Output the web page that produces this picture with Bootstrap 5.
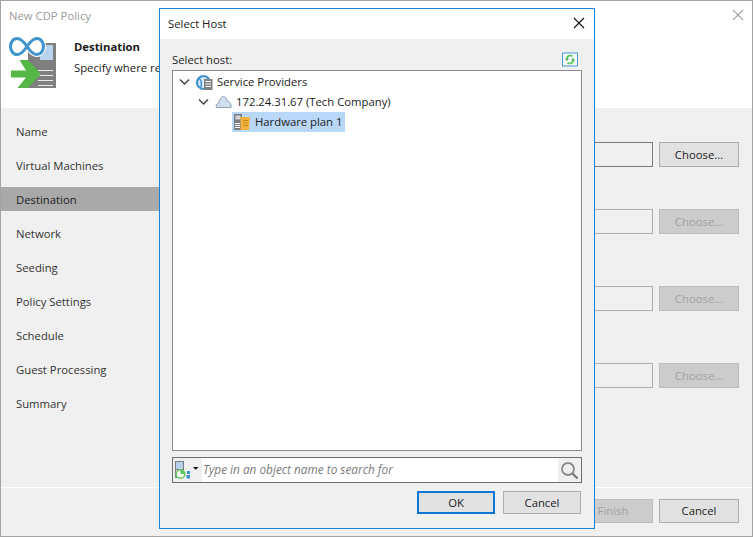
<!DOCTYPE html>
<html lang="en"><head><meta charset="utf-8"><title>Select Host</title>
<link rel="stylesheet" href="https://cdn.jsdelivr.net/npm/bootstrap@5.3.0/dist/css/bootstrap.min.css">
<style>
html,body{margin:0;height:537px;overflow:hidden;background:#fff}
body{font-family:"Open Sans","Noto Sans","Liberation Sans",sans-serif;font-size:11.3px;line-height:16px;color:#222}
.wiz{width:753px;height:537px;border:1px solid #a3a3a3;display:flex;flex-direction:column;position:relative;background:#f0f0f0}
.wiz-head{height:107px;background:#fff;flex:none;padding:7px 8px 0;position:relative}
.wiz-title{color:#9a9a9a;height:16px}
.wiz-x{position:absolute;right:8px;top:8px}
.wiz-id{margin-top:11px;gap:16px}
.wiz-id svg{flex:none;margin-left:-1px}
.wiz-id b{font-weight:700;color:#1a1a1a}
.wiz-id .lines{padding-top:4px}
.wiz-id .lines div:last-child{margin-top:5px;white-space:nowrap}
.wiz-main{flex:1;min-height:0}
.side{width:158px;flex:none;padding-top:11px}
.side div{height:24px;line-height:26px;padding-left:15px;margin-bottom:10px;color:#333}
.side .on{background:#a9a9a9;color:#1d1d1d}
.pane{flex:1;padding:34px 13px 0 0}
.frow{gap:6px;height:25px}
.frow.r2{margin-top:42px}
.frow.r3{margin-top:52px}
.fld{flex:1;background:#f0f0f0;border:1px solid #7a7a7a}
.frow.off .fld{border-color:#adadb5}
.vbtn{width:80px;height:25px;padding:0;border:1px solid #adadad;border-radius:0;background:#e1e1e1;font-size:11.3px;line-height:20px;color:#222;flex:none}
.vbtn:disabled{background:#ccc;border-color:#bcbcbc;color:#a0a0a0;opacity:1}
.wiz-foot{height:49px;flex:none;border-top:1px solid #fff;padding-top:11px;padding-right:13px;gap:6px}
.wiz-foot .vbtn{height:24px}
.dlg{position:absolute;left:158px;top:7px;width:436px;height:521px;border:1px solid #1883d7;background:#f0f0f0;display:flex;flex-direction:column}
.dlg-head{height:30px;background:#fff;padding:7px 8px 0;flex:none;position:relative;color:#222}
.dlg-x{position:absolute;right:9px;top:8px}
.dlg-body{flex:1;padding:13px 12px 0;min-height:0}
.lblrow{height:18px;position:relative}
.lblrow svg{position:absolute;right:4px;top:0}
.tree{height:381px;background:#fff;border:1px solid #8a8a94;padding:1px 0 0 3px}
.tn{height:20px;gap:0}
.tn.l2{padding-left:19px}
.tn.l3{padding-left:56px}
.tn .chev{width:16px;flex:none;margin-right:4px}
.tn .ic{margin-right:4px;flex:none}
.tn .txt{color:#1c1c1c;white-space:nowrap}
.sel{background:#b9d7f7;height:20px;padding-right:3px}
.srch{height:26px;margin-top:6px;border:1px solid #6f6f6f;background:#fff}
.srch .l{width:29px;height:24px;background:#f0f0f0;flex:none}
.srch em{flex:1;color:#7b7b7b;padding:0 0 2px 1px;font-style:italic;font-size:11.8px}
.srch .r{width:23px;height:24px;background:#f0f0f0;flex:none}
.dlg-foot{gap:8px;margin-top:8px;padding-right:1px}
.dlg-foot .vbtn{width:78px;height:23px}
.dlg-foot .okb{border:2px solid #0a78d4;line-height:19px}
</style></head><body>
<div class="wiz">
  <div class="wiz-head">
    <div class="wiz-title">New CDP Policy</div>
    <svg class="wiz-x" width="12" height="12" viewBox="0 0 12 12"><path d="M1 1l10 10M11 1L1 11" stroke="#a5a5a5" stroke-width="1.1" fill="none"/></svg>
    <div class="d-flex wiz-id">
      <svg width="50" height="54" viewBox="8 35 50 54">
        <rect x="28" y="43" width="28" height="45" fill="#7f7f7f"/>
        <rect x="40" y="45" width="13" height="15" fill="#b9d2ee"/>
        <path d="M38 70.500h15M38 75.500h15M38 80.500h15M38 85.500h15" stroke="#ececec" stroke-width="1.100"/>
        <path d="M27 46.500C24 42 21 38.500 17 38.500 13 38.500 10.500 42.500 10.500 46.500 10.500 50.500 13 54.500 17 54.500 21 54.500 24 51 27 46.500 30 42 33 38.500 37 38.500 41 38.500 43.500 42.500 43.500 46.500 43.500 50.500 41 54.500 37 54.500 33 54.500 30 51 27 46.500Z" fill="#fff" stroke="#fff" stroke-width="5"/>
        <path d="M27 46.500C24 42 21 38.500 17 38.500 13 38.500 10.500 42.500 10.500 46.500 10.500 50.500 13 54.500 17 54.500 21 54.500 24 51 27 46.500 30 42 33 38.500 37 38.500 41 38.500 43.500 42.500 43.500 46.500 43.500 50.500 41 54.500 37 54.500 33 54.500 30 51 27 46.500Z" fill="none" stroke="#3f95cb" stroke-width="3"/>
        <path d="M19.500 60H28L41 74 28 88H17.500L26 77.500H11V70.500H26Z" fill="#55b745"/>
      </svg>
      <div class="lines"><div><b>Destination</b></div><div>Specify where re</div></div>
    </div>
  </div>
  <div class="wiz-main d-flex">
    <div class="side">
      <div>Name</div><div>Virtual Machines</div><div class="on">Destination</div><div>Network</div><div>Seeding</div><div>Policy Settings</div><div>Schedule</div><div>Guest Processing</div><div>Summary</div>
    </div>
    <div class="pane">
      <div class="d-flex frow"><div class="fld"></div><button class="btn vbtn">Choose...</button></div>
      <div class="d-flex frow off r2"><div class="fld"></div><button class="btn vbtn" disabled>Choose...</button></div>
      <div class="d-flex frow off r3"><div class="fld"></div><button class="btn vbtn" disabled>Choose...</button></div>
      <div class="d-flex frow off r3"><div class="fld"></div><button class="btn vbtn" disabled>Choose...</button></div>
    </div>
  </div>
  <div class="wiz-foot d-flex justify-content-end">
    <button class="btn vbtn" disabled>Finish</button><button class="btn vbtn">Cancel</button>
  </div>

  <div class="dlg">
    <div class="dlg-head">Select Host
      <svg class="dlg-x" width="12" height="12" viewBox="0 0 12 12"><path d="M1 1l10 10M11 1L1 11" stroke="#111" stroke-width="1.1" fill="none"/></svg>
    </div>
    <div class="dlg-body d-flex flex-column">
      <div class="lblrow">Select host:
        <svg width="16" height="15" viewBox="0 0 16 15"><rect x=".5" y="1" width="15" height="13" fill="#f4f8fc" stroke="#4a9ad0"/><path d="M10.500 4.200A3.800 3.800 0 0 0 5 5.500V7M5.500 10.800A3.800 3.800 0 0 0 11 9.500V8" stroke="#5cc75a" stroke-width="1.700" fill="none"/><path d="M3 6.500h4L5 9zM9 8.500h4L11 6z" fill="#46b348"/></svg>
      </div>
      <div class="tree">
        <div class="tn d-flex align-items-center"><svg class="chev" width="16" height="10" viewBox="0 0 16 10"><path d="M4 2.500l4.500 4.500 4.500-4.500" stroke="#444" stroke-width="1.500" fill="none"/></svg>
          <svg class="ic" width="17" height="17" viewBox="0 0 17 17"><circle cx="7.500" cy="8.500" r="6.500" fill="#dcebf6" stroke="#3d95cf" stroke-width="2.200"/><path d="M3 4c2 2 3 5 2 9" stroke="#3d95cf" stroke-width="1.500" fill="none"/><rect x="8" y="5" width="8.500" height="11" fill="#808080"/><path d="M9.500 7.500h5.500M9.500 10h5.500M9.500 12.500h5.500" stroke="#fff"/></svg>
          <span class="txt">Service Providers</span></div>
        <div class="tn l2 d-flex align-items-center"><svg class="chev" width="16" height="10" viewBox="0 0 16 10"><path d="M4 2.500l4.500 4.500 4.500-4.500" stroke="#444" stroke-width="1.500" fill="none"/></svg>
          <svg class="ic" width="17" height="14" viewBox="0 0 17 14"><path d="M1.500 12.500C.5 10.500 1.500 8.500 3.500 8.500 4.500 4.500 6.500 1.500 8.500 1.500 10.500 1.500 11.500 3.500 12 6 14.500 6 16.500 9 16 12.500Z" fill="#cfe0f2" stroke="#949ea9"/></svg>
          <span class="txt">172.24.31.67 (Tech Company)</span></div>
        <div class="tn l3 d-flex align-items-center"><div class="sel d-flex align-items-center"><svg class="ic" width="19" height="18" viewBox="0 0 19 18"><rect x="2" y="1" width="8" height="16" fill="#7d7d7d"/><rect x="3.500" y="2.500" width="5" height="4" fill="#d5d5d5"/><path d="M3 10.500h5M3 12.500h5M3 14.500h5" stroke="#fff"/><path d="M8.500 4H18L17 17H8.500z" fill="#f1b13c"/><path d="M11 7.500h5M11 10h5M11 12.500h5" stroke="#c98a1c"/></svg><span class="txt">Hardware plan 1</span></div></div>
      </div>
      <div class="srch d-flex align-items-center">
        <div class="l d-flex align-items-center"><svg width="29" height="22" viewBox="0 0 29 22"><rect x="2.500" y="2.500" width="8" height="8" fill="#b9d0ec" stroke="#7c7c7c"/><path d="M2.500 10.500v8h4" fill="none" stroke="#7c7c7c"/><circle cx="7.500" cy="15" r="4.300" fill="#fff" stroke="#5cc75a" stroke-width="1.500"/><path d="M7.500 15v-4.300A4.300 4.300 0 0 1 11.800 15z" fill="#5cc75a"/><rect x="14" y="12" width="3" height="3" fill="#3d95cf"/><rect x="13.500" y="16" width="3.500" height="3.500" fill="#3d95cf"/><path d="M20 8h5.500l-2.750 2.800z" fill="#000"/></svg></div>
        <em>Type in an object name to search for</em>
        <div class="r d-flex align-items-center justify-content-center"><svg width="19" height="19" viewBox="0 0 19 19"><circle cx="8" cy="8" r="6" fill="none" stroke="#8a8a8a" stroke-width="1.800"/><path d="M12.500 12.500l5 5" stroke="#7a7a7a" stroke-width="2.400"/></svg></div>
      </div>
      <div class="d-flex justify-content-end dlg-foot">
        <button class="btn vbtn okb">OK</button><button class="btn vbtn">Cancel</button>
      </div>
    </div>
  </div>
</div>
<script src="https://cdn.jsdelivr.net/npm/bootstrap@5.3.0/dist/js/bootstrap.bundle.min.js"></script>
</body></html>
